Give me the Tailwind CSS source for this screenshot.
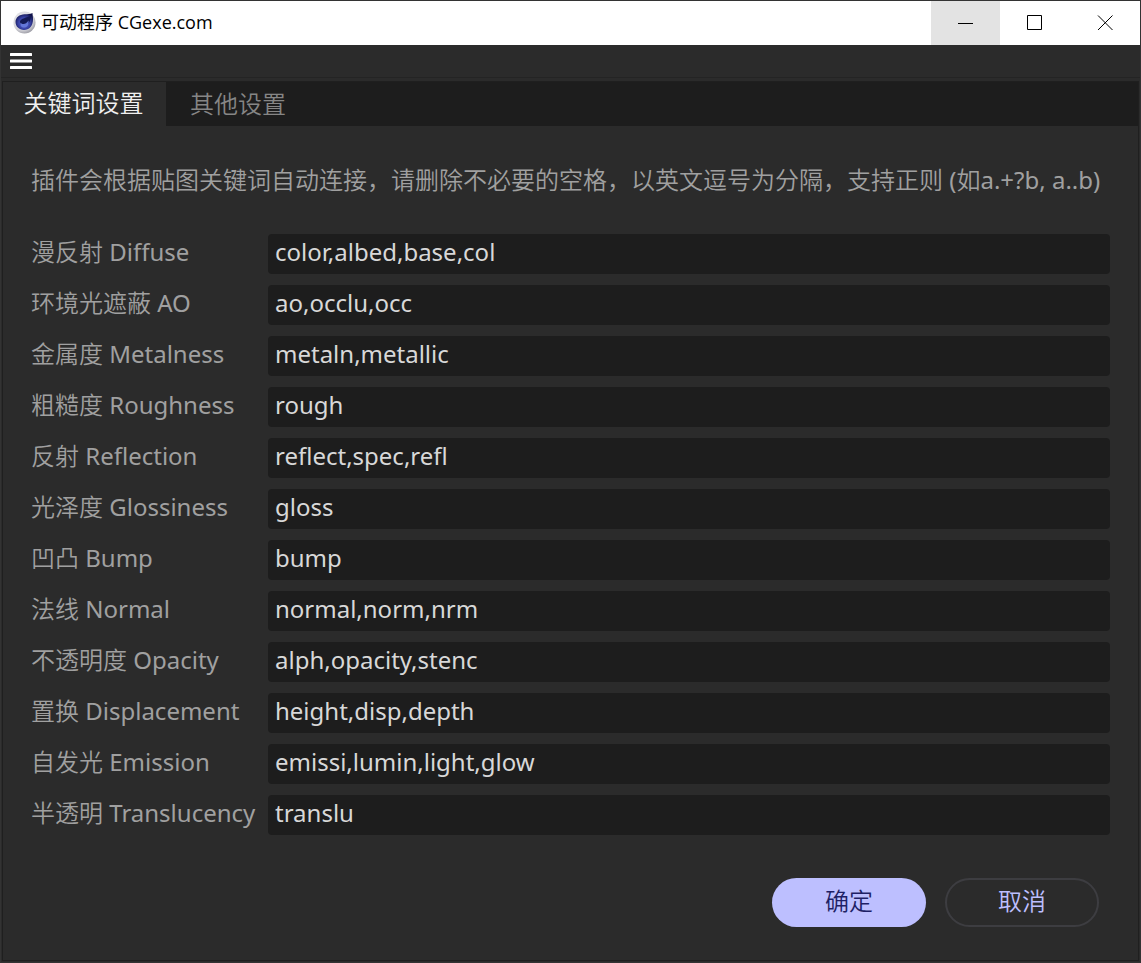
<!DOCTYPE html>
<html lang="zh-CN">
<head>
<meta charset="utf-8">
<title>可动程序 CGexe.com</title>
<script src="https://cdn.jsdelivr.net/npm/@tailwindcss/browser@4"></script>
</head>
<body class="min-h-screen flex flex-col bg-[#2b2b2b] border border-[#333333] font-['Noto_Sans','Noto_Sans_CJK_SC',sans-serif] text-2xl text-[#a0a0a0]">
  <header class="flex h-11 shrink-0 bg-white text-black">
    <div class="flex flex-1 items-center gap-1 pl-3">
      <svg class="size-6" viewBox="0 0 24 24" aria-hidden="true">
        <defs>
          <radialGradient id="rim" cx="40%" cy="35%" r="70%"><stop offset="0" stop-color="#f4f4f6"/><stop offset=".7" stop-color="#d2d2d8"/><stop offset="1" stop-color="#96969f"/></radialGradient>
          <radialGradient id="ball" cx="50%" cy="60%" r="60%"><stop offset="0" stop-color="#5a6cd0"/><stop offset=".55" stop-color="#3a44a8"/><stop offset="1" stop-color="#10124a"/></radialGradient>
        </defs>
        <circle cx="11.500" cy="11.500" r="11" fill="url(#rim)"/>
        <path d="M19.500 2C19.500 4 20 5.500 20 8.500C20 15 16 19 11 19C6 19 2.500 15.300 2.500 11C2.500 6.500 6.500 3.500 11.500 3.300C15 3.200 17.500 3.200 19.500 2Z" fill="url(#ball)"/>
        <path d="M18 4.500C18 8 16.500 13.500 12 14.500C8.500 15 6.500 13 7 10.500C8 7 13.500 7 18 4.500Z" fill="#141a55"/>
        <path d="M7.500 11.500C9.500 14 13 13.500 15.500 9.500C16 15 13.500 16.500 11 16.500C8.500 16.500 7 14.500 7.500 11.500Z" fill="#6477d8"/>
      </svg>
      <h1 class="font-['Open_Sans','Noto_Sans_CJK_SC',sans-serif] pb-0.5 text-lg leading-6">可动程序 CGexe.com</h1>
    </div>
    <button aria-label="最小化" class="flex w-[69px] items-center justify-center bg-[#e3e3e3]"><svg class="size-4" viewBox="0 0 16 16" fill="none" stroke="#000"><path d="M0 8.500H15"/></svg></button>
    <button aria-label="最大化" class="flex w-[70px] items-center justify-center"><svg class="size-4" viewBox="0 0 16 16" fill="none" stroke="#000"><path d="M.5 .5H14.500V14.500H.5Z"/></svg></button>
    <button aria-label="关闭" class="flex w-[70px] items-center justify-center"><svg class="size-4" viewBox="0 0 16 16" fill="none" stroke="#000"><path d="M1 .5L15.500 15M15.500 .5L1 15"/></svg></button>
  </header>

  <div class="flex h-[33px] shrink-0 items-center border-b border-[#242424] pl-2">
    <button aria-label="菜单" class="h-4"><svg class="h-4 w-6" viewBox="0 0 24 16" fill="#fff"><rect x="1" y="0" width="22" height="3" rx=".5"/><rect x="1" y="6.500" width="22" height="3" rx=".5"/><rect x="1" y="13" width="22" height="3" rx=".5"/></svg></button>
  </div>

  <main class="mt-[3px] mb-px flex flex-1 flex-col border-t border-x border-b border-[#1f1f1f] mx-px">
    <div role="tablist" class="flex h-11 shrink-0 bg-[#1d1d1d] font-[350]">
      <button role="tab" aria-selected="true" class="flex w-[163px] justify-center bg-[#2b2b2b] pr-0.5 leading-[42px] text-[#f0f0f0]">关键词设置</button>
      <button role="tab" aria-selected="false" class="px-6 leading-[42px] text-[#868686]">其他设置</button>
    </div>

    <form class="flex flex-1 flex-col px-7">
      <p class="mt-9 whitespace-nowrap leading-9 font-[350]">插件会根据贴图关键词自动连接，请删除不必要的空格，以英文逗号为分隔，支持正则 <span class="font-normal">(</span>如<span class="font-normal">a.+?b, a..b)</span></p>
      <div class="mt-9 grid grid-cols-[237px_1fr] gap-y-[11px] leading-9 [&_label]:whitespace-nowrap [&_label]:font-[350] [&_input]:h-10 [&_input]:w-full [&_input]:min-w-0 [&_input]:rounded [&_input]:bg-[#1d1d1d] [&_input]:px-[7px] [&_input]:pb-1.5 [&_input]:text-[#d8d8d8] [&_input]:outline-none [&_span]:font-normal">
        <label for="diffuse">漫反射 <span>Diffuse</span></label><input id="diffuse" value="color,albed,base,col">
        <label for="ao">环境光遮蔽 <span>AO</span></label><input id="ao" value="ao,occlu,occ">
        <label for="metal">金属度 <span>Metalness</span></label><input id="metal" value="metaln,metallic">
        <label for="rough">粗糙度 <span>Roughness</span></label><input id="rough" value="rough">
        <label for="refl">反射 <span>Reflection</span></label><input id="refl" value="reflect,spec,refl">
        <label for="gloss">光泽度 <span>Glossiness</span></label><input id="gloss" value="gloss">
        <label for="bump">凹凸 <span>Bump</span></label><input id="bump" value="bump">
        <label for="normal">法线 <span>Normal</span></label><input id="normal" value="normal,norm,nrm">
        <label for="opacity">不透明度 <span>Opacity</span></label><input id="opacity" value="alph,opacity,stenc">
        <label for="disp">置换 <span>Displacement</span></label><input id="disp" value="height,disp,depth">
        <label for="emission">自发光 <span>Emission</span></label><input id="emission" value="emissi,lumin,light,glow">
        <label for="transl">半透明 <span>Translucency</span></label><input id="transl" value="translu">
      </div>
      <div class="mt-[43px] flex justify-end gap-[19px] pb-8 pr-[11px] font-[350]">
        <button type="button" class="h-[49px] w-[154px] rounded-full bg-[#bdbfff] pb-1 text-[#1f1f66]">确定</button>
        <button type="button" class="h-[49px] w-[154px] rounded-full border-2 border-[#3d3d41] pb-1 text-[#bdbfff]">取消</button>
      </div>
    </form>
  </main>
</body>
</html>
